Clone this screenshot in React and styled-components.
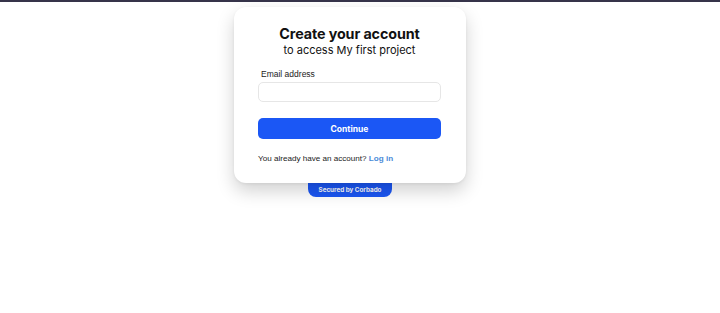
import styled, { createGlobalStyle } from "styled-components";

const GlobalStyle = createGlobalStyle`
  * {
    box-sizing: border-box;
  }
  body {
    margin: 0;
    background: #fff;
    font-family: "Liberation Sans", Arial, sans-serif;
    color: #111;
  }
`;

const TopBar = styled.div`
  height: 2px;
  background-color: #36344a;
`;

const Wrap = styled.div`
  min-height: 311px;
  display: flex;
  flex-direction: column;
  align-items: center;
  padding: 5px 20px 0 0;
`;

const Card = styled.div`
  position: relative;
  z-index: 1;
  width: 232px;
  background-color: #fff;
  border-radius: 12px;
  padding: 18px 25px 19px 24px;
  box-shadow: 0 8px 18px rgba(0, 0, 0, 0.18), 0 1px 3px rgba(0, 0, 0, 0.06);
`;

const Title = styled.h1`
  margin: 0;
  text-align: center;
  font-family: Inter, "Liberation Sans", sans-serif;
  font-size: 14.3px;
  font-weight: 700;
  line-height: 18px;
  letter-spacing: -0.1px;
`;

const Subtitle = styled.p`
  margin: 0;
  text-align: center;
  font-family: Inter, "Liberation Sans", sans-serif;
  font-size: 11px;
  line-height: 14px;
  color: #111;
`;

const Field = styled.div`
  margin-top: 12px;
`;

const Label = styled.label`
  display: block;
  font-size: 8.5px;
  line-height: 11px;
  padding-left: 3px;
  margin-bottom: 2px;
  color: #222;
`;

const Input = styled.input`
  display: block;
  width: 100%;
  height: 20px;
  border: 1px solid #e6e6e6;
  border-radius: 5px;
  outline: none;
  background: #fff;
`;

const Button = styled.button`
  display: block;
  width: 100%;
  height: 21px;
  margin-top: 16px;
  border: none;
  border-radius: 5px;
  background-color: #1b57f5;
  color: #fff;
  font-family: Inter, "Liberation Sans", sans-serif;
  font-size: 8.5px;
  font-weight: 700;
`;

const Footer = styled.p`
  margin: 14px 0 0;
  font-size: 8.1px;
  line-height: 11px;
  color: #1a1a1a;
`;

const Link = styled.a`
  color: #4a8ad8;
  font-weight: 700;
  text-decoration: none;
`;

const Badge = styled.div`
  margin-top: -3px;
  width: 84px;
  height: 17px;
  padding-top: 3px;
  display: flex;
  align-items: center;
  justify-content: center;
  background-color: #1b57f5;
  border-radius: 0 0 8px 8px;
  color: #fff;
  font-family: Inter, "Liberation Sans", sans-serif;
  font-size: 6.3px;
  font-weight: 700;
`;

export default function App() {
  return (
    <>
      <GlobalStyle />
      <TopBar />
      <Wrap>
        <Card>
          <Title>Create your account</Title>
          <Subtitle>to access My first project</Subtitle>
          <Field>
            <Label>Email address</Label>
            <Input type="email" />
          </Field>
          <Button>Continue</Button>
          <Footer>
            You already have an account? <Link href="#">Log in</Link>
          </Footer>
        </Card>
        <Badge>Secured by Corbado</Badge>
      </Wrap>
    </>
  );
}
